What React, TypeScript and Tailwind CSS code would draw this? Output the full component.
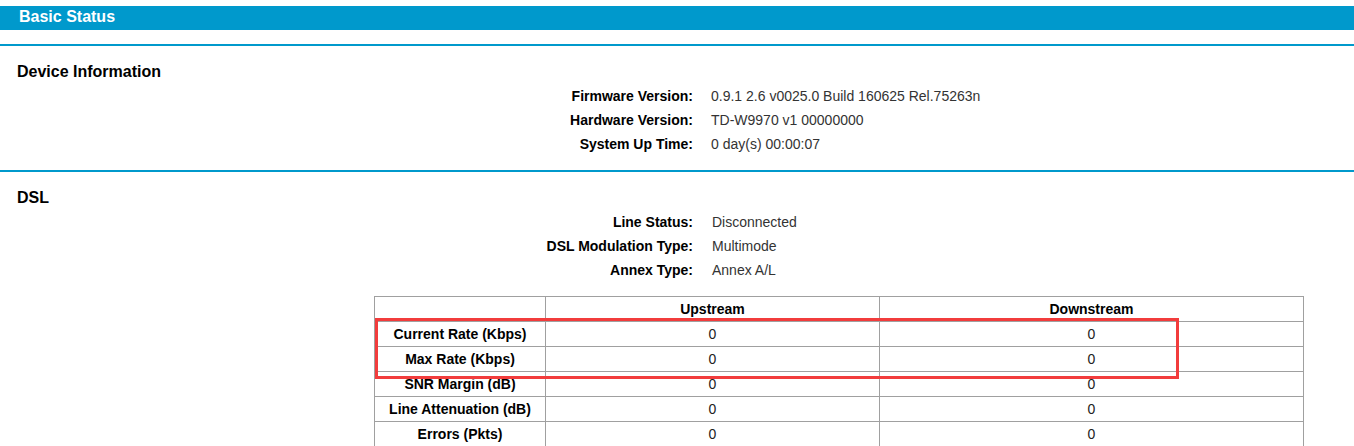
import React from 'react';

const deviceInfo = [
  { label: 'Firmware Version:', value: '0.9.1 2.6 v0025.0 Build 160625 Rel.75263n' },
  { label: 'Hardware Version:', value: 'TD-W9970 v1 00000000' },
  { label: 'System Up Time:', value: '0 day(s) 00:00:07' },
];

const dslInfo = [
  { label: 'Line Status:', value: 'Disconnected' },
  { label: 'DSL Modulation Type:', value: 'Multimode' },
  { label: 'Annex Type:', value: 'Annex A/L' },
];

const dslRows = [
  { name: 'Current Rate (Kbps)', up: '0', down: '0' },
  { name: 'Max Rate (Kbps)', up: '0', down: '0' },
  { name: 'SNR Margin (dB)', up: '0', down: '0' },
  { name: 'Line Attenuation (dB)', up: '0', down: '0' },
  { name: 'Errors (Pkts)', up: '0', down: '0' },
];

const InfoRows = ({ rows, valueGap }: { rows: { label: string; value: string }[]; valueGap: string }) => (
  <div className="mt-[2px]">
    {rows.map((r) => (
      <div key={r.label} className="flex h-6 items-center text-[14px]">
        <div className="w-[693px] shrink-0 text-right font-bold text-black">{r.label}</div>
        <div className={`${valueGap} text-[#333]`}>{r.value}</div>
      </div>
    ))}
  </div>
);

const SectionTitle = ({ children }: { children: React.ReactNode }) => (
  <h2 className="mt-[16px] h-5 pl-[17px] text-[16px] leading-5 font-bold text-black">{children}</h2>
);

export default function App() {
  return (
    <div
      className="relative h-[446px] w-[1354px] overflow-hidden bg-white"
      style={{ fontFamily: '"Liberation Sans", Arial, sans-serif' }}
    >
      {/* title bar */}
      <div className="mt-[6px] flex h-6 items-center bg-[#0099cc] pb-[2px] pl-[19px]">
        <span className="text-[16px] leading-5 font-bold text-white">Basic Status</span>
      </div>

      <div className="mt-[14px] h-[2px] bg-[#0099cc]" />
      <SectionTitle>Device Information</SectionTitle>
      <InfoRows rows={deviceInfo} valueGap="pl-[18px]" />

      <div className="mt-[14px] h-[2px] bg-[#0099cc]" />
      <SectionTitle>DSL</SectionTitle>
      <InfoRows rows={dslInfo} valueGap="pl-[19px]" />

      <table className="mt-[14px] ml-[374px] w-[929px] table-fixed border-collapse text-[14px]">
        <colgroup>
          <col className="w-[171px]" />
          <col className="w-[334px]" />
          <col className="w-[424px]" />
        </colgroup>
        <thead>
          <tr className="h-[25px]">
            <th className="border border-[#a0a0a0]" />
            <th className="border border-[#a0a0a0] font-bold text-black">Upstream</th>
            <th className="border border-[#a0a0a0] font-bold text-black">Downstream</th>
          </tr>
        </thead>
        <tbody>
          {dslRows.map((row) => (
            <tr key={row.name} className="h-[25px]">
              <td className="border border-[#a0a0a0] text-center font-bold text-black">{row.name}</td>
              <td className="border border-[#a0a0a0] text-center text-[#222]">{row.up}</td>
              <td className="border border-[#a0a0a0] text-center text-[#222]">{row.down}</td>
            </tr>
          ))}
        </tbody>
      </table>

      {/* highlight annotation */}
      <div className="pointer-events-none absolute top-[318px] left-[375px] h-[61px] w-[804px] border-[3px] border-[#f23c3c]" />
    </div>
  );
}
